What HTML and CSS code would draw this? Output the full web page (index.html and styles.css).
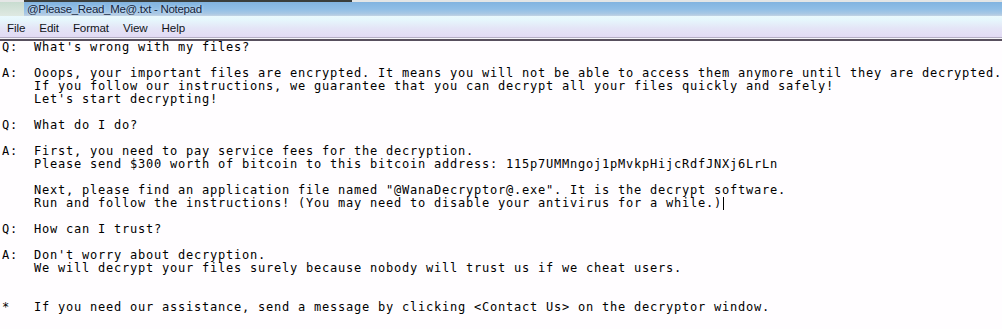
FILE: index.html
```html
<!DOCTYPE html>
<html>
<head>
<meta charset="utf-8">
<link rel="stylesheet" href="styles.css">
</head>
<body>
<div class="window">
  <div class="topstrip"><span class="topdark"></span></div>
  <div class="titlebar">
    <span class="iconpatch"></span>
    <span class="title">@Please_Read_Me@.txt - Notepad</span>
  </div>
  <div class="menubar">
    <span class="menu">File</span>
    <span class="menu">Edit</span>
    <span class="menu">Format</span>
    <span class="menu">View</span>
    <span class="menu">Help</span>
  </div>
  <div class="sep"></div>
  <pre class="editor">Q:  What's wrong with my files?

A:  Ooops, your important files are encrypted. It means you will not be able to access them anymore until they are decrypted.
    If you follow our instructions, we guarantee that you can decrypt all your files quickly and safely!
    Let's start decrypting!

Q:  What do I do?

A:  First, you need to pay service fees for the decryption.
    Please send $300 worth of bitcoin to this bitcoin address: 115p7UMMngoj1pMvkpHijcRdfJNXj6LrLn

    Next, please find an application file named "@WanaDecryptor@.exe". It is the decrypt software.
    Run and follow the instructions! (You may need to disable your antivirus for a while.)<span class="caret"></span>

Q:  How can I trust?

A:  Don't worry about decryption.
    We will decrypt your files surely because nobody will trust us if we cheat users.


*   If you need our assistance, send a message by clicking &lt;Contact Us&gt; on the decryptor window.</pre>
</div>
</body>
</html>
```

FILE: styles.css
```css
html, body {
  margin: 0;
  padding: 0;
  background: #ffffff;
}
.window {
  width: 1002px;
  height: 329px;
  overflow: hidden;
  display: flex;
  flex-direction: column;
  background: #fffdff;
}
.topstrip {
  height: 2px;
  background: #e4e6e6;
  display: flex;
}
.topdark {
  margin-left: 24px;
  width: 328px;
  background: #3a3e3c;
}
.titlebar {
  height: 14px;
  display: flex;
  align-items: center;
  background: linear-gradient(to bottom, #82b4e0 0%, #90bee6 50%, #aac8e4 85%, #c4d4e4 100%);
}
.iconpatch {
  width: 24px;
  height: 14px;
  background: linear-gradient(to bottom, #c8dcd0, #dfe9e2);
}
.title {
  margin-left: 3px;
  font-family: "Liberation Sans", Arial, sans-serif;
  font-size: 11.5px;
  letter-spacing: -0.3px;
  line-height: 14px;
  color: #14243c;
  text-shadow: 0 0 3px rgba(255,255,255,0.7);
  white-space: nowrap;
}
.menubar {
  height: 21px;
  display: flex;
  align-items: center;
  background: linear-gradient(to bottom, #eaf9fd 0%, #e6f6fc 20%, #e4e4f6 60%, #e2daf4 100%);
}
.menu {
  padding: 0 7px;
  font-family: "Liberation Sans", Arial, sans-serif;
  font-size: 11.6px;
  letter-spacing: -0.1px;
  line-height: 14px;
  color: #101418;
  margin-top: 2px;
}
.sep {
  height: 1px;
  background: #b4aec4;
  border-bottom: 1px solid #f6f4fa;
  box-shadow: 0 2px 0 #58505e;
  margin-bottom: 2px;
}
.editor {
  margin: 0;
  padding: 0 0 0 2px;
  font-family: "DejaVu Sans Mono", monospace;
  font-size: 12px;
  letter-spacing: 0.775px;
  line-height: 13px;
  color: #000000;
  background: #fffdff;
  white-space: pre;
}
.caret {
  display: inline-block;
  width: 1px;
  height: 13px;
  background: #000;
  vertical-align: top;
  margin-left: 1px;
}
```
